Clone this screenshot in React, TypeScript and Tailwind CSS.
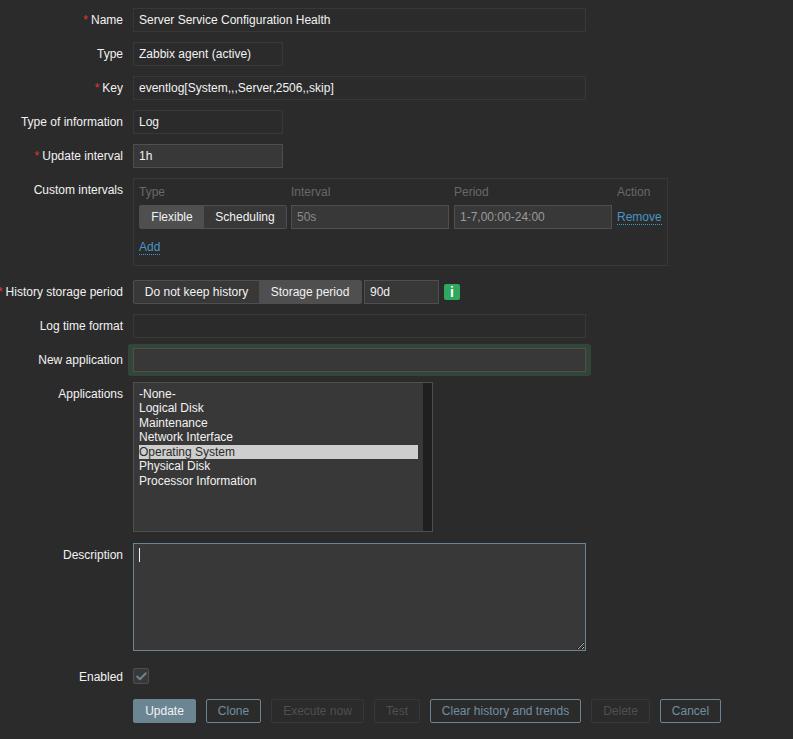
import type { ReactNode } from 'react'
import { Check } from 'lucide-react'

function Row({ label, required, className, children }: { label: string; required?: boolean; className?: string; children: ReactNode }) {
  return (
    <div className={`flex gap-[10px] ${className ?? ''}`}>
      <div className="flex h-6 w-[123px] shrink-0 items-center justify-end whitespace-nowrap text-[#f2f2f2]">
        {required && <span className="mr-[3px] text-[#e33734]">*</span>}
        {label}
      </div>
      {children}
    </div>
  )
}

function Field({ value, width, active }: { value?: string; width: string; active?: boolean }) {
  return (
    <input
      readOnly
      value={value ?? ''}
      className={`h-6 border px-[5px] text-[#f2f2f2] outline-none ${width} ${active ? 'border-[#4f4f4f] bg-[#383838]' : 'border-[#383838] bg-transparent'}`}
    />
  )
}

function Btn({ label, width, kind }: { label: string; width: string; kind: 'main' | 'alt' | 'off' }) {
  const styles = {
    main: 'border-[#6c8593] bg-[#6c8593] text-[#f2f2f2]',
    alt: 'border-[#6c8593] text-[#6f8fa3]',
    off: 'border-[#383838] text-[#4f4f4f]',
  }
  return (
    <button className={`h-6 rounded-[2px] border text-center ${width} ${styles[kind]}`}>{label}</button>
  )
}

const apps = ['-None-', 'Logical Disk', 'Maintenance', 'Network Interface', 'Operating System', 'Physical Disk', 'Processor Information']

export default function App() {
  return (
    <div className="h-[739px] overflow-hidden bg-[#2b2b2b] pt-2 text-[12px] font-['Liberation_Sans',Arial,sans-serif]">
      <div className="flex flex-col">
        <Row label="Name" required className="mb-[10px]">
          <Field value="Server Service Configuration Health" width="w-[453px]" />
        </Row>
        <Row label="Type" className="mb-[10px]">
          <Field value="Zabbix agent (active)" width="w-[150px]" />
        </Row>
        <Row label="Key" required className="mb-[10px]">
          <Field value="eventlog[System,,,Server,2506,,skip]" width="w-[453px]" />
        </Row>
        <Row label="Type of information" className="mb-[10px]">
          <Field value="Log" width="w-[150px]" />
        </Row>
        <Row label="Update interval" required className="mb-[10px]">
          <Field value="1h" width="w-[150px]" active />
        </Row>

        <Row label="Custom intervals" className="mb-[14px]">
          <div className="h-[88px] w-[535px] border border-[#383838] px-[5px] pt-1">
            <div className="flex h-[22px] text-[#686868]">
              <div className="w-[152px]">Type</div>
              <div className="w-[163px]">Interval</div>
              <div className="w-[163px]">Period</div>
              <div>Action</div>
            </div>
            <div className="flex items-center">
              <div className="flex h-6 w-[148px] overflow-hidden rounded-[2px] border border-[#4f4f4f] text-[#f2f2f2]">
                <div className="flex w-[64px] items-center justify-center bg-[#4f4f4f]">Flexible</div>
                <div className="flex flex-1 items-center justify-center bg-[#383838]">Scheduling</div>
              </div>
              <input readOnly value="50s" className="ml-1 h-6 w-[158px] border border-[#4f4f4f] bg-[#383838] px-[5px] text-[#8a8a8a] outline-none" />
              <input readOnly value="1-7,00:00-24:00" className="ml-[5px] h-6 w-[158px] border border-[#4f4f4f] bg-[#383838] px-[5px] text-[#9a9a9a] outline-none" />
              <a className="ml-[5px] border-b border-dotted border-[#4796c4] leading-[14px] text-[#4796c4]">Remove</a>
            </div>
            <a className="mt-[11px] inline-block border-b border-dotted border-[#4796c4] leading-[14px] text-[#4796c4]">Add</a>
          </div>
        </Row>

        <Row label="History storage period" required className="mb-[10px]">
          <div className="flex items-center">
            <div className="flex h-6 w-[229px] overflow-hidden rounded-[2px] border border-[#4f4f4f] text-[#f2f2f2]">
              <div className="flex w-[125px] items-center justify-center bg-[#383838]">Do not keep history</div>
              <div className="flex flex-1 items-center justify-center bg-[#4f4f4f]">Storage period</div>
            </div>
            <input readOnly value="90d" className="ml-[2px] h-6 w-[75px] border border-[#4f4f4f] bg-[#383838] px-[5px] text-[#f2f2f2] outline-none" />
            <span className="ml-[5px] flex h-4 w-4 items-center justify-center rounded-[2px] bg-[#2fa75f] text-[14px] font-bold text-white">i</span>
          </div>
        </Row>

        <Row label="Log time format" className="mb-[10px]">
          <Field width="w-[453px]" />
        </Row>
        <Row label="New application" className="mb-[10px]">
          <div className="-mx-[5px] -my-1 rounded-[2px] bg-[#334538] px-[5px] py-1">
            <Field width="block w-[453px]" active />
          </div>
        </Row>

        <Row label="Applications" className="mb-[11px]">
          <div className="flex h-[150px] w-[300px] border border-[#4f4f4f] bg-[#383838]">
            <div className="flex-1 pl-[5px] pr-[5px] pt-[3.5px] leading-[14.5px]">
              {apps.map((app) =>
                app === 'Operating System' ? (
                  <div key={app} className="bg-[#cecece] text-[#2b2b2b]">{app}</div>
                ) : (
                  <div key={app} className="text-[#f2f2f2]">{app}</div>
                ),
              )}
            </div>
            <div className="w-[9px] bg-[#1f1f1f]" />
          </div>
        </Row>

        <Row label="Description" className="mb-[17px]">
          <div className="relative h-[108px] w-[453px]">
            <textarea readOnly className="block h-[108px] w-[453px] border border-[#6c8593] bg-[#383838] outline-none" />
            <span className="absolute left-[6px] top-[5px] h-[14px] w-px bg-[#f2f2f2]" />
          </div>
        </Row>

        <Row label="Enabled" className="mb-[13px] h-[18px] items-center">
          <span className="flex h-4 w-4 items-center justify-center self-start rounded-[2px] border border-[#4f4f4f] bg-[#383838]">
            <Check size={13} strokeWidth={3.5} className="text-[#6c8593]" />
          </span>
        </Row>

        <div className="flex gap-[10px] pl-[133px]">
          <Btn label="Update" width="w-[63px]" kind="main" />
          <Btn label="Clone" width="w-[55px]" kind="alt" />
          <Btn label="Execute now" width="w-[93px]" kind="off" />
          <Btn label="Test" width="w-[46px]" kind="off" />
          <Btn label="Clear history and trends" width="w-[151px]" kind="alt" />
          <Btn label="Delete" width="w-[59px]" kind="off" />
          <Btn label="Cancel" width="w-[61px]" kind="alt" />
        </div>
      </div>
    </div>
  )
}
